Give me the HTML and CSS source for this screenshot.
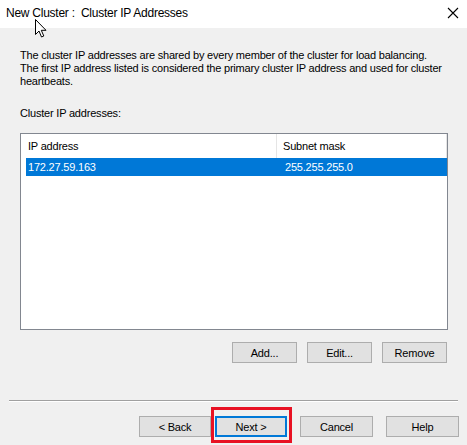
FILE: index.html
```html
<!DOCTYPE html>
<html>
<head>
<meta charset="utf-8">
<link rel="stylesheet" href="styles.css">
</head>
<body>
<div class="window">
  <div class="titlebar">
    <span class="title">New Cluster :&nbsp; Cluster IP Addresses</span>
    <svg class="close" width="12" height="12" viewBox="0 0 12 12"><path d="M1 1 L11 11 M11 1 L1 11" stroke="#000" stroke-width="1.1" fill="none"/></svg>
  </div>
  <div class="content">
    <p class="desc">The cluster IP addresses are shared by every member of the cluster for load balancing.<br>The first IP address listed is considered the primary cluster IP address and used for cluster<br>heartbeats.</p>
    <p class="label">Cluster IP addresses:</p>
    <div class="listbox">
      <div class="header">
        <div class="col col-ip">IP address</div>
        <div class="col col-mask">Subnet mask</div>
      </div>
      <div class="row selected">
        <div class="col col-ip">172.27.59.163</div>
        <div class="col col-mask">255.255.255.0</div>
      </div>
    </div>
    <div class="listbuttons">
      <button class="btn small">Add...</button>
      <button class="btn small">Edit...</button>
      <button class="btn small">Remove</button>
    </div>
  </div>
  <div class="separator"></div>
  <div class="footer">
    <button class="btn wide">&lt; Back</button>
    <div class="highlight-wrap">
      <button class="btn wide default">Next &gt;</button>
      <div class="redbox"></div>
    </div>
    <button class="btn wide cancel">Cancel</button>
    <button class="btn wide help">Help</button>
  </div>
  <svg class="cursor" width="13" height="20" viewBox="0 0 13 20"><path d="M0.5 0.5 L0.5 15.5 L4 12 L6.5 18 L8.8 17 L6.3 11.3 L11 11.3 Z" fill="#fff" stroke="#000" stroke-width="1" stroke-linejoin="miter"/></svg>
</div>
</body>
</html>
```
FILE: styles.css
```css
html, body {
  margin: 0;
  padding: 0;
}
body {
  width: 467px;
  height: 445px;
  overflow: hidden;
  background: #f0f0f0;
  font-family: "Liberation Sans", Arial, sans-serif;
  font-size: 11px;
  letter-spacing: -0.2px;
  color: #000;
}
.window {
  position: relative;
  width: 467px;
  height: 445px;
  background: #f0f0f0;
}
.titlebar {
  height: 28px;
  background: #fff;
  display: flex;
  align-items: center;
  justify-content: space-between;
  padding: 0 8px 0 6px;
  box-sizing: border-box;
}
.title {
  font-size: 12px;
  letter-spacing: -0.25px;
  margin-top: -3px;
}
.close {
  margin-top: -3px;
}
.content {
  padding: 21px 19px 0 20px;
}
.desc {
  margin: 0;
  line-height: 13px;
  white-space: nowrap;
}
.label {
  margin: 19px 0 0 0;
  line-height: 13px;
}
.listbox {
  margin-top: 13px;
  width: 428px;
  height: 197px;
  box-sizing: border-box;
  border: 1px solid #828790;
  background: #fff;
  padding-left: 5px;
}
.header {
  display: flex;
  height: 24px;
  align-items: center;
  border-right: 1px solid #e5e5e5;
  width: 421px;
  box-sizing: border-box;
}
.header .col-ip {
  width: 251px;
  height: 24px;
  line-height: 24px;
  border-right: 1px solid #e5e5e5;
  box-sizing: border-box;
  padding-left: 2px;
}
.header .col-mask {
  padding-left: 6px;
  line-height: 24px;
}
.row {
  display: flex;
  height: 18px;
  line-height: 18px;
  width: 421px;
}
.row .col-ip {
  width: 251px;
  padding-left: 2px;
}
.row .col-mask {
  padding-left: 6px;
}
.selected {
  background: #0078d7;
  color: #fff;
}
.listbuttons {
  display: flex;
  justify-content: flex-end;
  gap: 10px;
  margin-top: 12px;
  width: 427px;
}
.btn {
  font-family: "Liberation Sans", Arial, sans-serif;
  font-size: 11px;
  letter-spacing: -0.2px;
  color: #000;
  background: #e1e1e1;
  border: 1px solid #adadad;
  box-sizing: border-box;
  padding: 0;
  margin: 0;
}
.small {
  width: 65px;
  height: 21px;
}
.separator {
  margin: 37px 0 0 9px;
  width: 449px;
  height: 1px;
  background: #a0a0a0;
  border-bottom: 1px solid #fff;
}
.footer {
  display: flex;
  align-items: flex-start;
  margin-top: 14px;
  padding-left: 139px;
}
.wide {
  width: 72px;
  height: 21px;
}
.highlight-wrap {
  position: relative;
  margin-left: 4px;
}
.default {
  border: 2px solid #0078d7;
  width: 72px;
}
.redbox {
  position: absolute;
  left: -4px;
  top: -9px;
  right: -5px;
  bottom: -6px;
  border: 3px solid #e81123;
}
.cancel {
  margin-left: 13px;
  width: 73px;
}
.help {
  margin-left: 13px;
  width: 73px;
}
.cursor {
  position: absolute;
  left: 35px;
  top: 19px;
}
```
